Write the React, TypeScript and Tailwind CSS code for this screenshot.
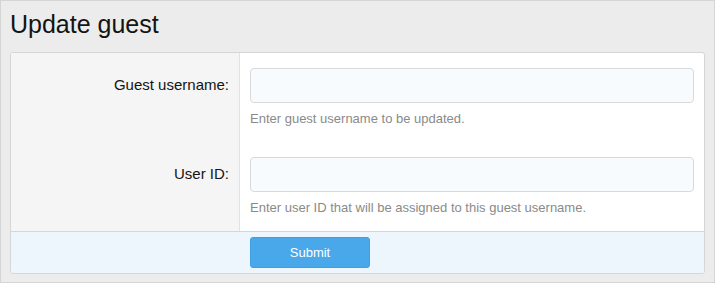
export default function App() {
  const rows = [
    { label: 'Guest username:', hint: 'Enter guest username to be updated.' },
    { label: 'User ID:', hint: 'Enter user ID that will be assigned to this guest username.' },
  ];

  return (
    <div className="w-[715px] h-[283px] bg-[#ececec] border border-[#d5d5d5] px-[9px] pt-[8px] font-['Liberation_Sans',Arial,sans-serif]">
      <h1 className="text-[25px] leading-[30px] text-[#141414] mb-[13px]">Update guest</h1>

      <div className="bg-white border border-[#d6d6d6] rounded-[3px] overflow-hidden">
        {rows.map((row) => (
          <div key={row.label} className="flex">
            <div className="w-[229px] shrink-0 bg-[#f5f5f5] border-r border-[#e2e2e2] pt-[15px] pr-[10px]">
              <div className="h-[35px] flex items-center justify-end text-[15px] text-[#141414]">
                {row.label}
              </div>
            </div>
            <div className="flex-1 pl-[10px] pr-[10px] py-[15px]">
              <input
                type="text"
                className="block w-full h-[35px] bg-[#f7fbfe] border border-[#d9d9d9] rounded-[4px] outline-none"
              />
              <p className="mt-[7px] text-[13px] leading-[17px] text-[#8a8a8a]">{row.hint}</p>
            </div>
          </div>
        ))}

        <div className="border-t border-[#d6d6d6] bg-[#eef6fd] pl-[239px] py-[5px]">
          <button
            type="button"
            className="w-[120px] h-[31px] bg-[#48a8ea] rounded-[3px] text-white text-[13px] border border-[#3f9fe0]"
          >
            Submit
          </button>
        </div>
      </div>
    </div>
  );
}
